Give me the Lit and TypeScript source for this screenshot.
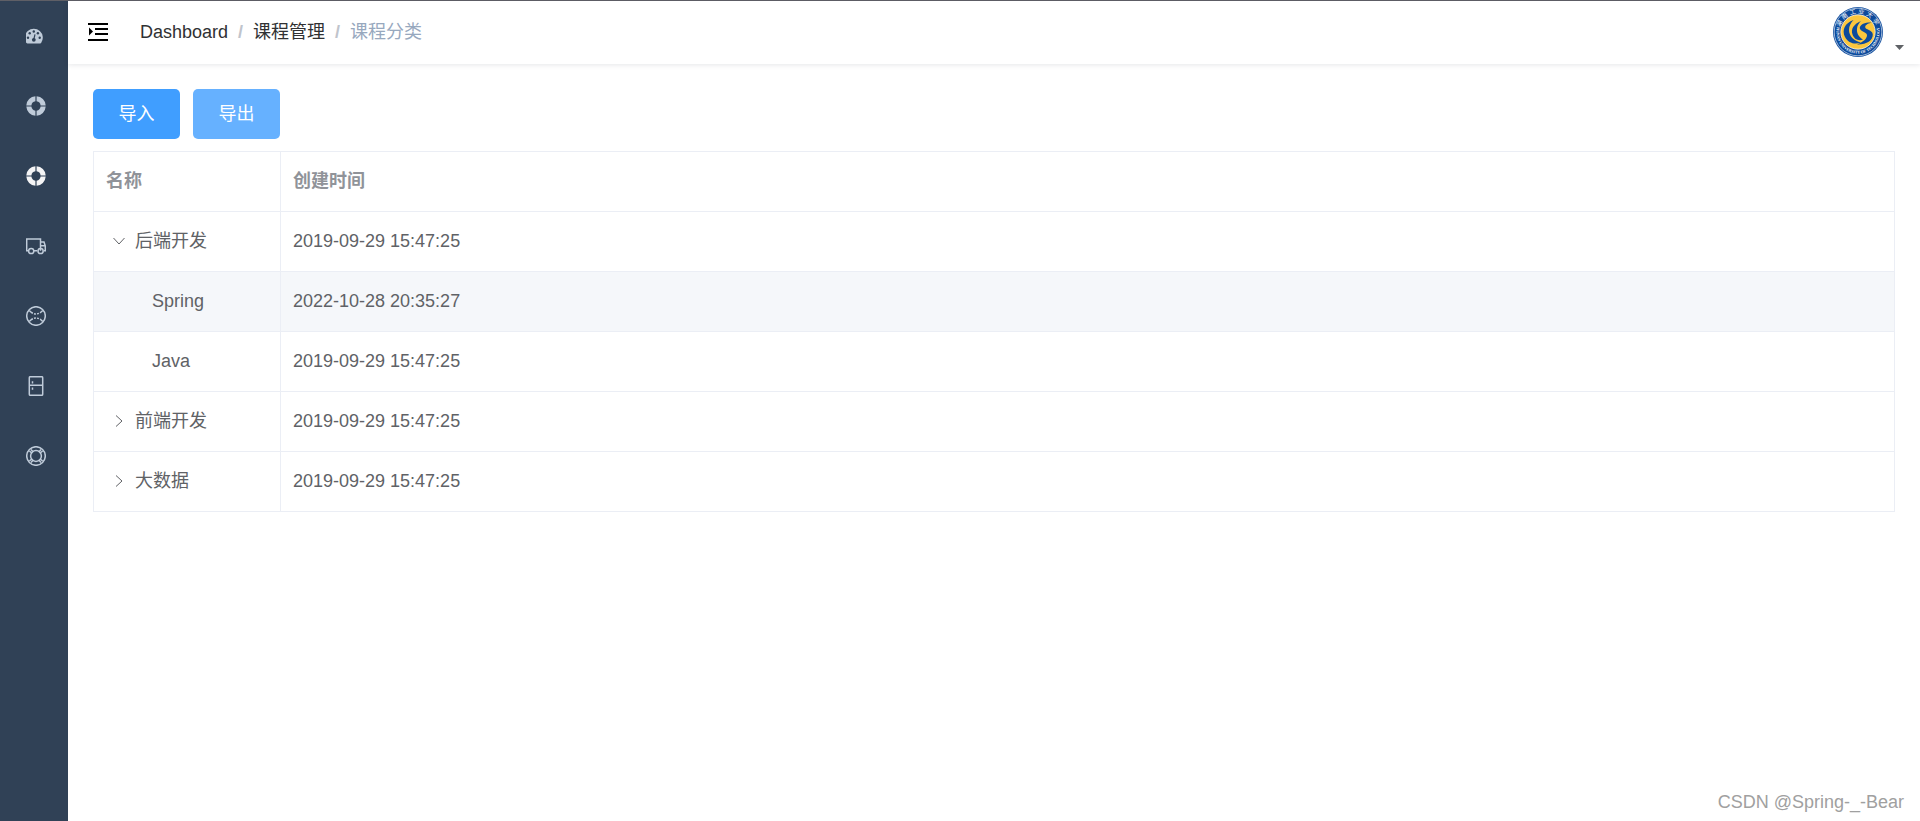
import { LitElement, html, svg, css } from "lit";
import { customElement, state } from "lit/decorators.js";
import { classMap } from "lit/directives/class-map.js";

const ring = (r: number) => svg`<circle cx="10" cy="10" r=${r} />`;

const solidHelp = svg`
  <g fill="currentColor" stroke="none">
    <path d="M9.4 .3A9.7 9.7 0 0 0 .3 9.4H5.4A4.8 4.8 0 0 1 9.4 5.2Z" />
    <path d="M10.6 .3A9.7 9.7 0 0 1 19.7 9.4H14.6A4.8 4.8 0 0 0 10.6 5.2Z" />
    <path d="M9.4 19.7A9.7 9.7 0 0 1 .3 10.6H5.4A4.8 4.8 0 0 0 9.4 14.8Z" />
    <path d="M10.6 19.7A9.7 9.7 0 0 0 19.7 10.6H14.6A4.8 4.8 0 0 1 10.6 14.8Z" />
  </g>`;

const menu = [
  {
    name: "Dashboard",
    icon: svg`
      <path fill="currentColor" stroke="none"
        d="M.5 17A9 9 0 1 1 15.100 17Q14.700 17.400 14.200 17.400H1.400Q.9 17.400 .5 17Z" />
      <g fill="#304156" stroke="none">
        <circle cx="2" cy="11.700" r="1.200" /><circle cx="3.700" cy="7.200" r="1.200" />
        <circle cx="7.800" cy="5.500" r="1.200" /><circle cx="11.900" cy="7.200" r="1.200" />
        <circle cx="13.700" cy="11.700" r="1.200" /><circle cx="7.800" cy="13.800" r="1.900" />
      </g>
      <path stroke="#304156" stroke-width="1.200" d="M7.800 13.500 9 8.300" />`,
  },
  { name: "权限管理", icon: solidHelp },
  { name: "课程管理", icon: solidHelp, active: true },
  {
    name: "订单管理",
    icon: svg`<path d="M2.500 14.800H.7V3H14.500V14.800M8 14.800H11.300M14.500 6H18L19.300 10V14.800H18M14.500 9.800H19" />
      <circle cx="5.200" cy="15" r="2.600" /><circle cx="14.600" cy="15" r="2.600" />`,
  },
  {
    name: "活动管理",
    icon: svg`${ring(9.3)}<path d="M3.300 4.500 5 6.200M16.700 4.500 15 6.200M3.300 15.500 5 13.800M16.700 15.500 15 13.800" />
      <path stroke-dasharray="2 1.200" d="M5 6.200Q10 9.700 15 6.200M5 13.800Q10 10.300 15 13.800" />`,
  },
  {
    name: "点播管理",
    icon: svg`<rect x="3.300" y=".7" width="13.400" height="18.600" rx="1" />
      <path d="M3.300 9.300H16.700M6.500 5.300V7.500M6.500 11.500V13.700" />`,
  },
  {
    name: "公众号管理",
    icon: svg`${ring(9.3)}${ring(5.4)}
      <path d="M3.400 5 6 7.200M5 3.400 7.200 6M16.600 5 14 7.200M15 3.400 12.800 6M3.400 15 6 12.800M5 16.600 7.200 14M16.600 15 14 12.800M15 16.600 12.800 14" />`,
  },
];

interface Subject {
  title: string;
  created: string;
  children?: Subject[];
}

const subjects: Subject[] = [
  {
    title: "后端开发",
    created: "2019-09-29 15:47:25",
    children: [
      { title: "Spring", created: "2022-10-28 20:35:27" },
      { title: "Java", created: "2019-09-29 15:47:25" },
    ],
  },
  { title: "前端开发", created: "2019-09-29 15:47:25", children: [] },
  { title: "大数据", created: "2019-09-29 15:47:25", children: [] },
];

@customElement("side-menu")
class SideMenu extends LitElement {
  static styles = css`
    :host { display: block; flex: none; width: 68px; background: #304156; }
    .item {
      display: flex; align-items: center; justify-content: center;
      height: 70px; padding-left: 3px; box-sizing: border-box; color: #bfcbd9;
    }
    .active { color: #f4f4f5; }
    .icon { width: 20px; height: 20px; fill: none; stroke: currentColor; stroke-width: 1.5; }
  `;
  render() {
    return html`<nav>
      ${menu.map(
        (m) => html`<a href="#" class=${classMap({ item: true, active: !!m.active })} aria-label=${m.name}>
          <svg class="icon" viewBox="0 0 20 20" aria-hidden="true">${m.icon}</svg>
        </a>`,
      )}
    </nav>`;
  }
}

@customElement("top-bar")
class TopBar extends LitElement {
  static styles = css`
    :host {
      display: flex; align-items: center; height: 63px; padding: 0 16px 2px 20px;
      box-sizing: border-box; background: #fff; box-shadow: 0 1px 5px rgba(0, 21, 41, 0.1);
    }
    button { border: 0; padding: 0; background: none; font: inherit; cursor: pointer; }
    .toggle { display: flex; margin-right: 32px; }
    .crumbs { display: flex; flex: 1; align-items: center; color: #97a8be; }
    .crumbs a { color: #303133; text-decoration: none; }
    .sep { margin: 0 10px; color: #c0c4cc; font-weight: bold; }
    .user { display: flex; align-items: flex-end; gap: 12px; }
    .caret { margin-bottom: 7px; fill: #5f6266; }
    .ring { fill: #fff; font: bold 4px "Liberation Serif", serif; text-anchor: middle; }
    .ring-cn { font: 6px "Noto Sans CJK SC", sans-serif; letter-spacing: 2px; }
  `;
  render() {
    return html`
      <button class="toggle" aria-label="Toggle menu">
        <svg width="20" height="18" viewBox="0 0 20 18">
          <path d="M0 1H20M7 6H20M7 11H20M0 17H20" stroke="#000" stroke-width="2" />
          <path d="M1 4.500 5 8.500 1 12.500Z" />
        </svg>
      </button>
      <nav class="crumbs">
        <a href="#">Dashboard</a><span class="sep">/</span>
        <a href="#">课程管理</a><span class="sep">/</span>
        <span>课程分类</span>
      </nav>
      <button class="user" aria-label="User menu">
        <svg width="50" height="50" viewBox="0 0 50 50">
          <defs>
            <path id="upper" d="M6.500 25A18.500 18.500 0 0 1 43.500 25" />
            <path id="lower" d="M5.500 16A21.500 21.500 0 1 0 44.500 16" />
          </defs>
          <circle cx="25" cy="25" r="25" fill="#0c4a9c" />
          <circle cx="25" cy="25" r="23.800" fill="none" stroke="#fff" stroke-width=".6" />
          <text class="ring ring-cn"><textPath href="#upper" startOffset="50%">湖南工业大学</textPath></text>
          <text class="ring"><textPath href="#lower" startOffset="50%">HUNAN UNIVERSITY OF TECHNOLOGY</textPath></text>
          <circle cx="25" cy="25" r="17.200" fill="#fbc63e" stroke="#fff" stroke-width=".7" />
          <path fill="#0c4a9c" d="M20.500 13C12 16 8.500 23 12 30 15 36 22 38 28 35.500 21 34 16 29 16 23 16 19 18 15.500 20.500 13Z" />
          <path fill="#0c4a9c" d="M28 14C21 17 17.500 22 19.500 27.500 21 32 25.500 34.500 30 32.500 25.500 30 23.500 26 24 21.500 24.300 18.500 26 16 28 14Z" />
          <path fill="#0c4a9c" d="M39 15.500C33 15 27.500 17 26.800 20.500 26.200 24.500 33.500 24.500 34 28 34.300 31.500 30 35 24 37.500 33 38 40 33.500 39.800 27.500 39.600 22.500 32 23 32.200 20 32.400 17.500 36 16.300 39 15.500Z" />
        </svg>
        <svg class="caret" width="9" height="5" viewBox="0 0 9 5"><path d="M0 0H9L4.500 5Z" /></svg>
      </button>
    `;
  }
}

@customElement("subject-table")
class SubjectTable extends LitElement {
  @state() private open = new Set(["后端开发"]);

  static styles = css`
    table {
      width: 100%; table-layout: fixed; border-collapse: collapse;
      color: #606266; text-align: left;
    }
    .name { width: 187px; }
    th, td { height: 60px; box-sizing: border-box; padding: 0 12px 2px; border: 1px solid #ebeef5; }
    th { color: #909399; }
    .child .title { padding-left: 58px; }
    .current td { background: #f5f7fa; }
    .cell { display: flex; align-items: center; }
    .expand {
      display: flex; justify-content: center; width: 25px; margin-right: 4px;
      padding: 0; border: 0; background: none; cursor: pointer;
    }
    .expand svg { fill: none; stroke: #606266; }
    .opened svg { transform: rotate(90deg); }
  `;

  private toggle(title: string) {
    const next = new Set(this.open);
    next.has(title) ? next.delete(title) : next.add(title);
    this.open = next;
  }

  render() {
    return html`<table>
      <thead>
        <tr><th class="name" scope="col">名称</th><th scope="col">创建时间</th></tr>
      </thead>
      <tbody>
        ${subjects.map((s) => {
          const opened = this.open.has(s.title);
          return html`
            <tr>
              <td>
                <div class="cell">
                  <button
                    class=${classMap({ expand: true, opened })}
                    aria-label="Expand" aria-expanded=${opened}
                    @click=${() => this.toggle(s.title)}
                  >
                    <svg width="12" height="12" viewBox="0 0 12 12"><path d="M3 .5 9 6 3 11.500" /></svg>
                  </button>
                  ${s.title}
                </div>
              </td>
              <td>${s.created}</td>
            </tr>
            ${opened
              ? s.children?.map(
                  (c) => html`<tr class=${classMap({ child: true, current: c.title === "Spring" })}>
                    <td class="title">${c.title}</td>
                    <td>${c.created}</td>
                  </tr>`,
                )
              : ""}
          `;
        })}
      </tbody>
    </table>`;
  }
}

@customElement("app-root")
class AppRoot extends LitElement {
  static styles = css`
    :host {
      display: flex; position: relative; box-sizing: border-box; min-height: 100vh;
      border-top: 1px solid #5f5f66; background: #fff;
      font: 18px/24px "Liberation Sans", "Noto Sans CJK SC", sans-serif;
    }
    .main { flex: 1; min-width: 0; }
    .content { padding: 25px; }
    .actions { display: flex; gap: 13px; margin-bottom: 12px; }
    .btn {
      height: 50px; width: 87px; padding: 0; border: 0; border-radius: 5px;
      background: #409eff; color: #fff; font: inherit; cursor: pointer;
    }
    .hover { background: #66b1ff; }
    .mark {
      position: absolute; right: 16px; bottom: 7px; color: #a0a0a0;
    }
  `;
  render() {
    return html`
      <side-menu></side-menu>
      <div class="main">
        <top-bar></top-bar>
        <main class="content">
          <div class="actions">
            <button class="btn">导入</button>
            <button class="btn hover">导出</button>
          </div>
          <subject-table></subject-table>
        </main>
      </div>
      <span class="mark">CSDN @Spring-_-Bear</span>
    `;
  }
}
